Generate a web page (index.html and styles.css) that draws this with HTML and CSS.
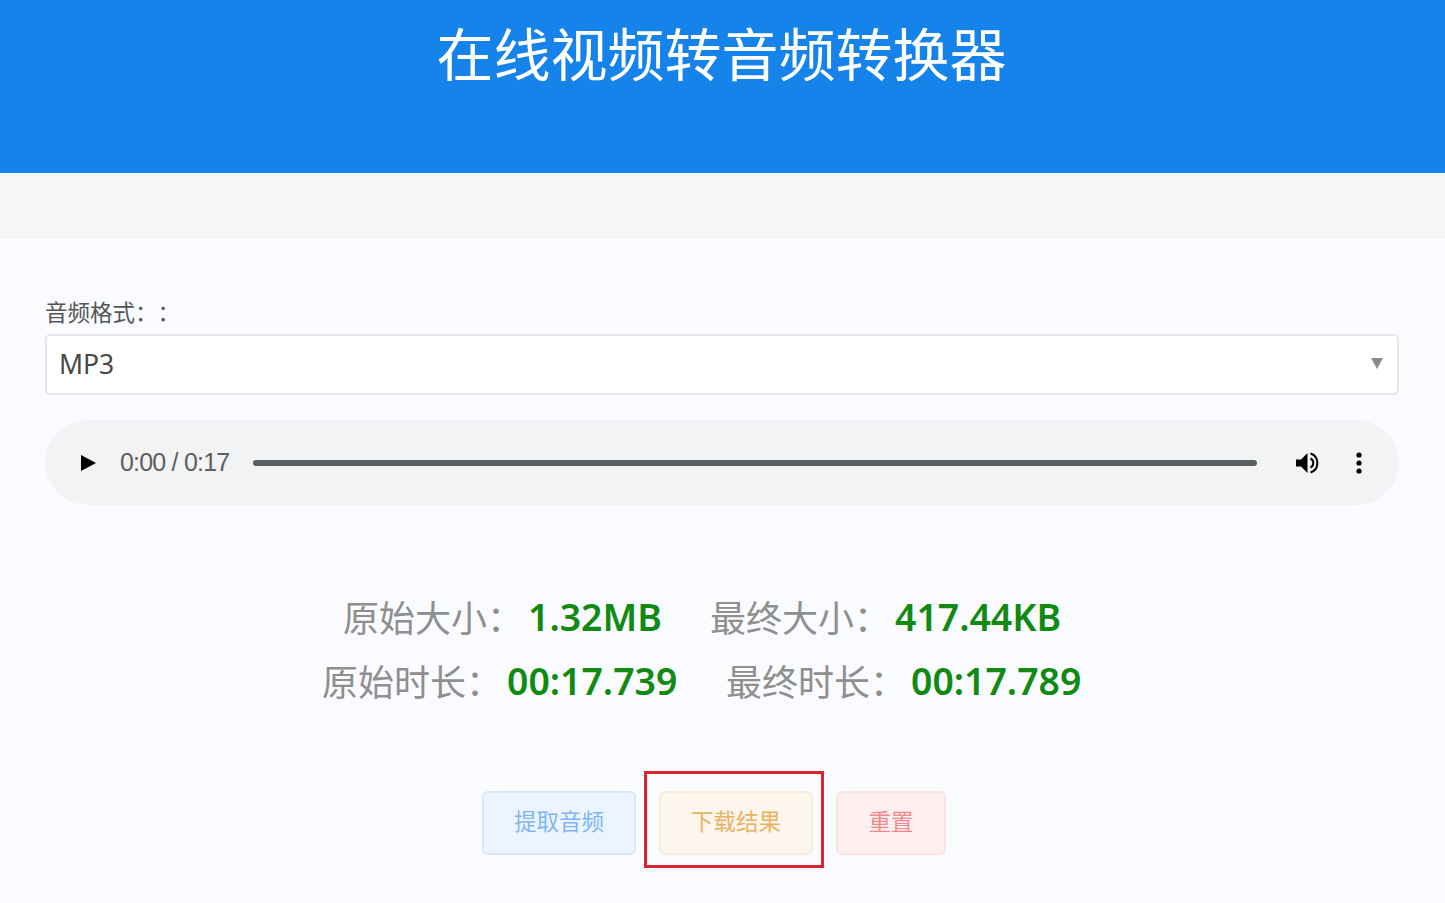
FILE: index.html
```html
<!DOCTYPE html>
<html lang="zh-CN">
<head>
<meta charset="utf-8">
<title>在线视频转音频转换器</title>
<link rel="stylesheet" href="styles.css">
</head>
<body>
<header class="hero"><h1>在线视频转音频转换器</h1></header>
<div class="strip"></div>
<main class="content">
  <div class="label">音频格式：：</div>
  <div class="select"><span>MP3</span><span class="caret"></span></div>
  <div class="player">
    <svg class="play" width="18" height="18" viewBox="0 0 18 18"><path d="M2 1 L17 9 L2 17 Z" fill="#000"/></svg>
    <span class="time">0:00 / 0:17</span>
    <div class="track"></div>
    <svg class="vol" width="26" height="26" viewBox="0 0 26 26"><path d="M1 9.5h5L12.5 3v20L6 16.5H1z" fill="#000"/><path d="M15.5 8.5a5 5 0 0 1 0 9" fill="none" stroke="#000" stroke-width="2"/><path d="M15.5 3.5a10 10 0 0 1 0 19" fill="none" stroke="#000" stroke-width="2"/></svg>
    <svg class="more" width="6" height="22" viewBox="0 0 6 22"><circle cx="3" cy="3" r="2.6"/><circle cx="3" cy="11" r="2.6"/><circle cx="3" cy="19" r="2.6"/></svg>
  </div>
  <section class="stats">
    <div class="stat-row first">
      <span class="key">原始大小：</span><b class="val v1">1.32MB</b>
      <span class="key k2">最终大小：</span><b class="val v2">417.44KB</b>
    </div>
    <div class="stat-row second">
      <span class="key">原始时长：</span><b class="val v1">00:17.739</b>
      <span class="key k2">最终时长：</span><b class="val v2">00:17.789</b>
    </div>
  </section>
  <div class="actions">
    <button class="btn blue">提取音频</button>
    <button class="btn orange">下载结果</button>
    <button class="btn red">重置</button>
  </div>
</main>
</body>
</html>
```
FILE: styles.css
```css
* { box-sizing: border-box; }
html, body { margin: 0; height: 100%; }
body {
  background: #f9fbfe;
  font-family: "Noto Sans", "Noto Sans CJK SC", sans-serif;
  text-spacing-trim: space-all;
  overflow: hidden;
}
.hero {
  height: 173px;
  background: #1583ea;
  display: flex;
  justify-content: center;
}
.hero h1 {
  margin: 8px 0 0 -2px;
  font-family: "Noto Sans CJK SC", sans-serif;
  font-weight: 400;
  font-size: 57px;
  line-height: 86px;
  height: 86px;
  color: #fff;
}
.strip {
  height: 65px;
  background: #f6f6f6;
  border-bottom: 1px solid #f0f1f2;
}
.content { padding: 58px 46px 0 45px; }
.label {
  font-family: "Noto Sans CJK SC", sans-serif;
  font-size: 22.5px;
  line-height: 30px;
  color: #555;
}
.select {
  margin-top: 8px;
  height: 61px;
  background: #fff;
  border: 2px solid #e5e6e8;
  border-radius: 5px;
  display: flex;
  align-items: center;
  justify-content: space-between;
  padding: 0 14px 2px 12px;
  font-size: 26.5px;
  color: #484848;
}
.caret {
  width: 0;
  height: 0;
  border-left: 6px solid transparent;
  border-right: 6px solid transparent;
  border-top: 11px solid #8a8a8a;
}
.player {
  margin-top: 25px;
  height: 85px;
  background: #f1f3f4;
  border-radius: 43px;
  display: flex;
  align-items: center;
  padding: 0 37px 0 34px;
}
.play { flex: none; }
.time {
  margin-left: 23px;
  font-family: "Liberation Sans", sans-serif;
  font-size: 25px;
  letter-spacing: -0.8px;
  color: #5d5f61;
  white-space: nowrap;
}
.track {
  flex: 1;
  margin: 0 38px 0 24px;
  height: 6px;
  background: #5b5e60;
  border-radius: 3px;
}
.vol { flex: none; }
.more { flex: none; margin-left: 35px; }
.stats { margin-top: 79px; }
.stat-row {
  display: flex;
  align-items: center;
  height: 64px;
  font-size: 36px;
  white-space: nowrap;
}
.first { padding-left: 298px; }
.second { padding-left: 277px; }
.key {
  font-family: "Noto Sans CJK SC", sans-serif;
  color: #8f8f8f;
  width: 185px;
  flex: none;
}
.k2 { width: 185px; }
.val {
  color: #118a11;
  font-weight: 600;
  font-size: 37.4px;
  flex: none;
}
.first .v1 { width: 182px; }
.second .v1 { width: 219px; }
.actions {
  margin-top: 79px;
  display: flex;
  padding-left: 437px;
  gap: 23px;
}
.btn {
  height: 64px;
  width: 154px;
  border-radius: 6px;
  font-family: "Noto Sans CJK SC", sans-serif;
  font-size: 22.5px;
  padding: 0 0 6px;
  border: 2px solid;
}
.blue { background: #ecf5ff; border-color: #d3e8fd; color: #7fb5f2; }
.orange { position: relative; background: #fdf6ec; border-color: #faecd8; color: #e9b262; }
.orange::after {
  content: "";
  box-sizing: border-box;
  position: absolute;
  left: -17px;
  top: -22px;
  width: 180px;
  height: 97px;
  border: 3px solid #d9242f;
}
.red { background: #fef0f0; border-color: #fde2e2; color: #f38a8a; width: 110px; }
```
